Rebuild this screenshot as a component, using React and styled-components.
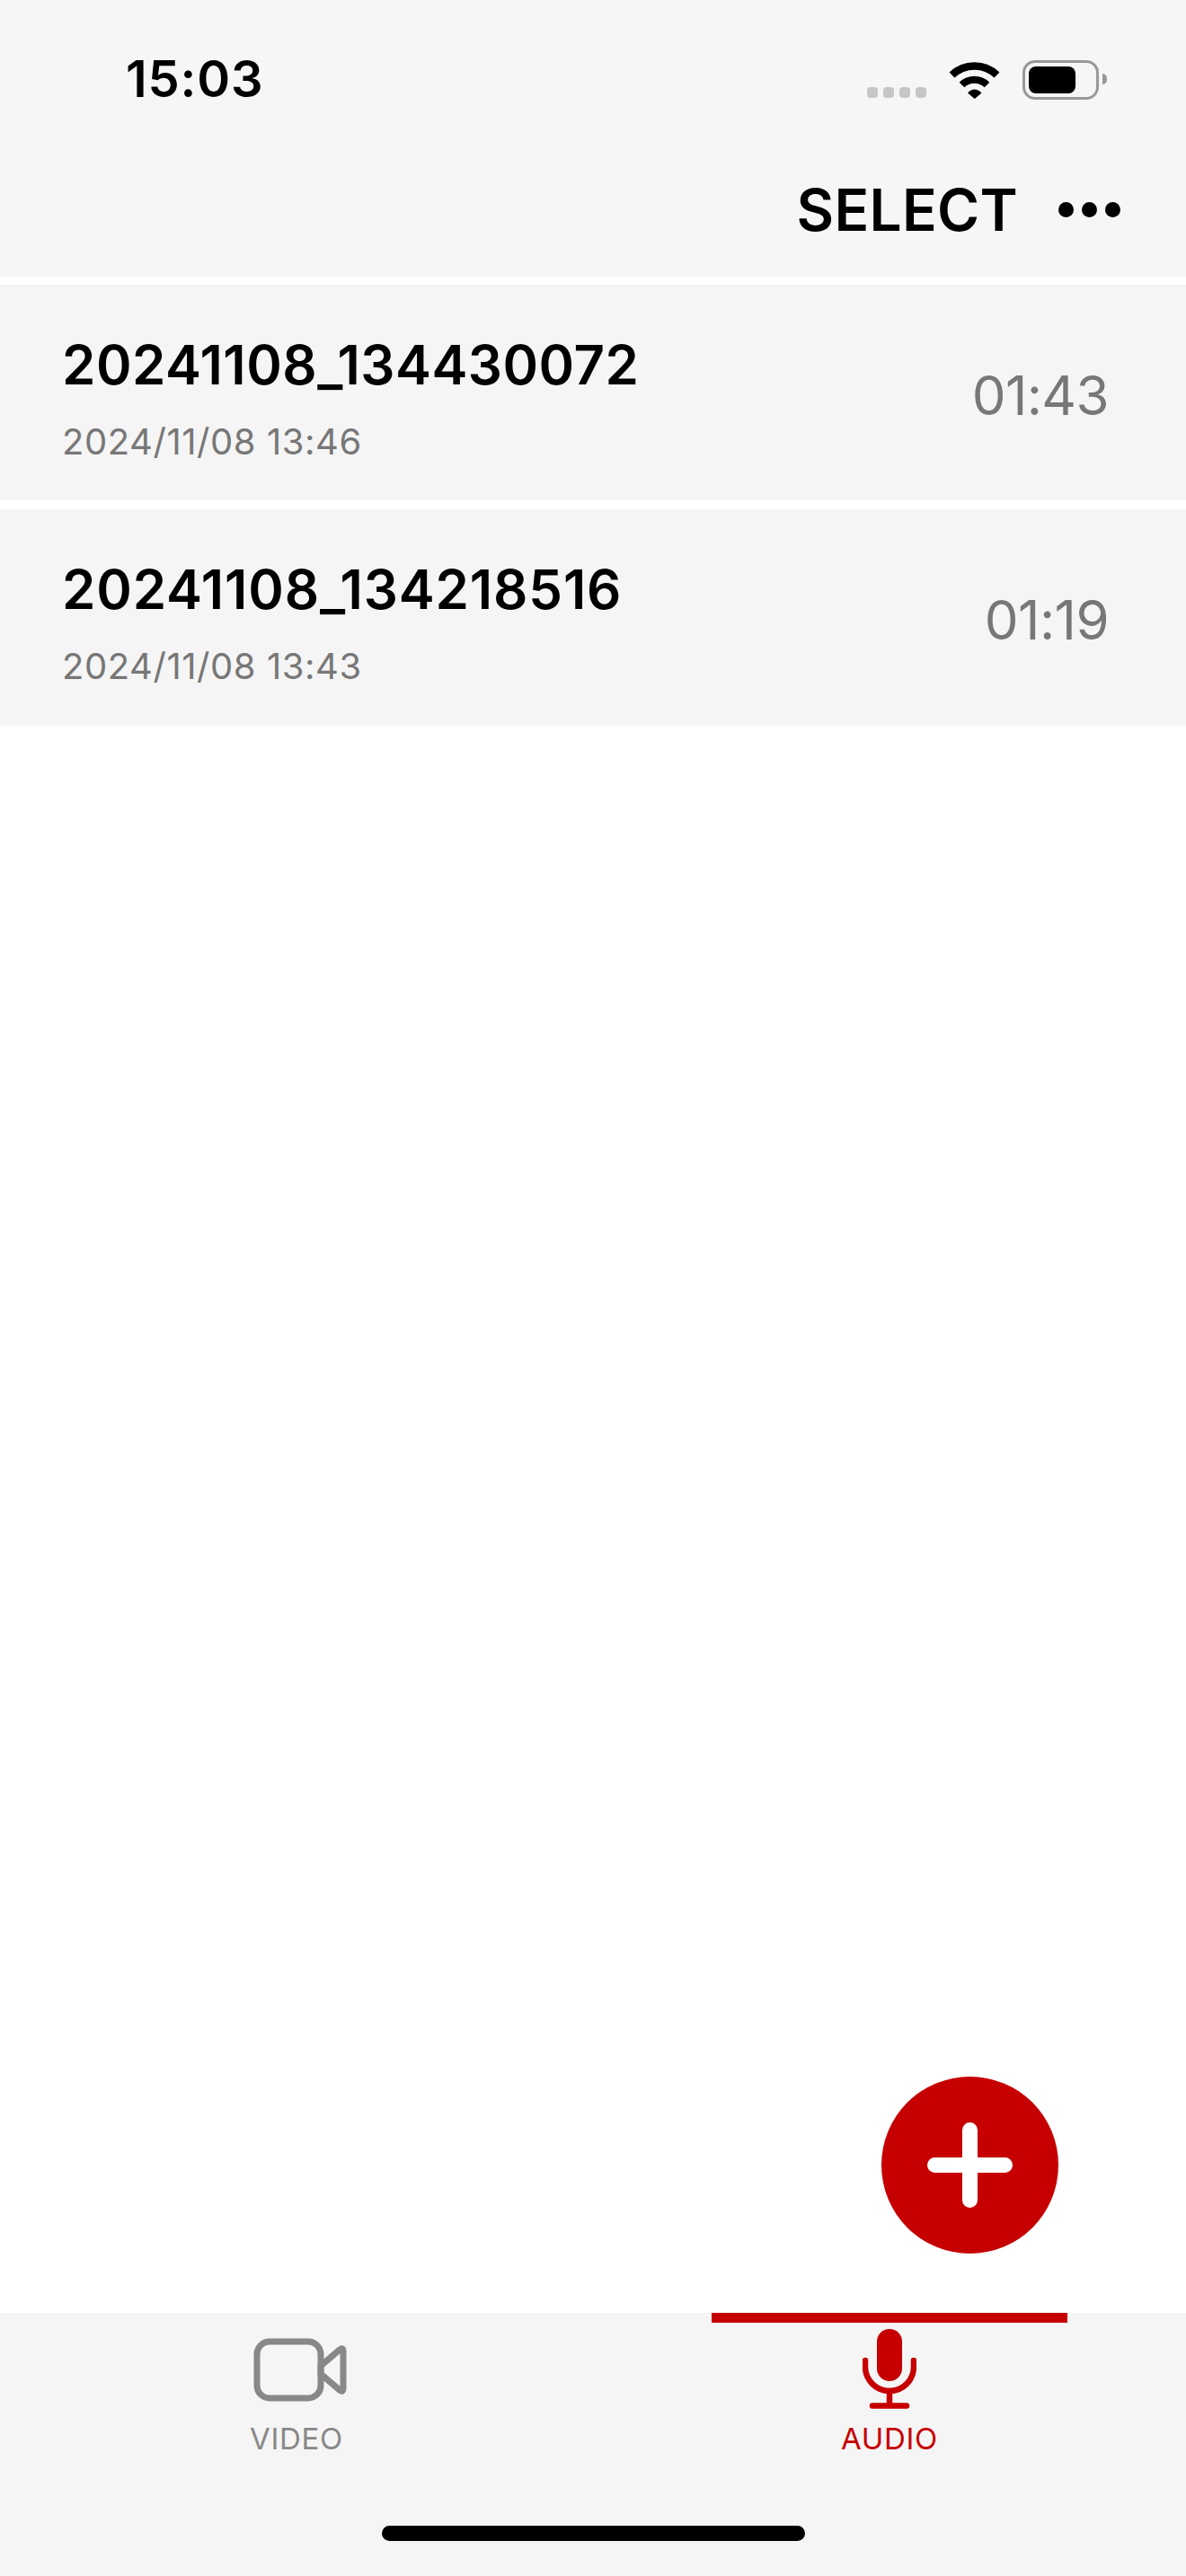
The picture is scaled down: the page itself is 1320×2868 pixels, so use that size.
import React from 'react';
import styled, { createGlobalStyle } from 'styled-components';

const recordings = [
  { name: '20241108_134430072', date: '2024/11/08 13:46', length: '01:43', height: 240, spacing: 0.5 },
  { name: '20241108_134218516', date: '2024/11/08 13:43', length: '01:19', height: 241, spacing: 0.85 },
];

const red = '#c60000';
const grey = '#777777';

const App = () => {
  return (
    <>
      <GlobalStyle />
      <Page>
        <Header>
          <StatusBar>
            <Clock>15:03</Clock>
            <StatusIcons>
              <Cell>
                {[...Array(4)].map((dot, i) => <CellDot key={i} />)}
              </Cell>
              <svg width="57" height="42" viewBox="0 0 57 42">
                <path d="M3.5 15.5 A36 36 0 0 1 53.5 15.5" fill="none" stroke="#000" strokeWidth="8.5" />
                <path d="M14.5 26.5 A20 20 0 0 1 42.5 26.5" fill="none" stroke="#000" strokeWidth="8" />
                <path d="M21 35.5 Q28.5 27.5 36.5 35.5 L28.8 42 Z" fill="#000" />
              </svg>
              <Battery>
                <BatteryLevel />
              </Battery>
            </StatusIcons>
          </StatusBar>
          <NavBar>
            <Select>SELECT</Select>
            <More>
              <MoreDot />
              <MoreDot />
              <MoreDot />
            </More>
          </NavBar>
        </Header>

        <List>
          {recordings.map((item) => (
            <Row key={item.name} $height={item.height}>
              <Info>
                <Name $spacing={item.spacing}>{item.name}</Name>
                <RecordedAt>{item.date}</RecordedAt>
              </Info>
              <Length>{item.length}</Length>
            </Row>
          ))}
        </List>

        <AddButton>
          <svg width="95" height="95" viewBox="0 0 95 95">
            <path d="M47.5 8.5 V86.5 M8.5 47.5 H86.5" stroke="#fff" strokeWidth="17" strokeLinecap="round" />
          </svg>
        </AddButton>

        <TabBar>
          <Tab>
            <VideoIcon>
              <svg width="104" height="71" viewBox="0 0 104 71" fill="none" stroke="#888" strokeWidth="7" strokeLinejoin="round">
                <rect x="4" y="4" width="71" height="63" rx="14" />
                <path d="M75 31 L96 13 Q100 10 100 15 V56 Q100 61 96 58 L75 40 Z" />
              </svg>
            </VideoIcon>
            <TabLabel>VIDEO</TabLabel>
          </Tab>
          <Tab $active>
            <TabIcon>
              <svg width="60" height="90" viewBox="0 0 60 90" fill="none" stroke={red} strokeWidth="6.5" strokeLinecap="round">
                <rect x="16" y="0" width="28" height="58" rx="14" fill={red} stroke="none" />
                <path d="M3 35 V42 A27 27 0 0 0 57 42 V35" />
                <path d="M30 69 V85 M11 85.5 H49" />
              </svg>
            </TabIcon>
            <TabLabel>AUDIO</TabLabel>
          </Tab>
          <HomeIndicator />
        </TabBar>
      </Page>
    </>
  );
};

const GlobalStyle = createGlobalStyle`
  html, body {
    margin: 0;
    padding: 0;
    background: #fff;
  }

  body {
    font-family: Inter, "Liberation Sans", sans-serif;
  }
`;

const Page = styled.div`
  position: relative;
  width: 1320px;
  height: 2868px;
  display: flex;
  flex-direction: column;
  overflow: hidden;
  background: #fff;
`;

const Header = styled.header`
  height: 308px;
  background: #f6f6f6;
`;

const StatusBar = styled.div`
  height: 176px;
  display: flex;
  align-items: center;
  justify-content: space-between;
  padding: 0 97px 0 140px;
  box-sizing: border-box;
`;

const Clock = styled.div`
  font-size: 56px;
  font-weight: 600;
  letter-spacing: 0.8px;
  color: #000;
`;

const StatusIcons = styled.div`
  display: flex;
  align-items: flex-end;
  gap: 25px;
`;

const Cell = styled.div`
  display: flex;
  gap: 6px;
  margin-bottom: 1px;
`;

const CellDot = styled.span`
  width: 12px;
  height: 12px;
  border-radius: 4px;
  background: #c6c6c6;
`;

const Battery = styled.div`
  position: relative;
  width: 85px;
  height: 44px;
  padding: 4px;
  box-sizing: border-box;
  border: 3.5px solid #999;
  border-radius: 14px;
  margin-bottom: -1px;

  &::after {
    content: '';
    position: absolute;
    top: 12px;
    right: -12px;
    width: 5px;
    height: 12px;
    border-radius: 0 6px 6px 0;
    background: #999;
  }
`;

const BatteryLevel = styled.div`
  width: 52px;
  height: 100%;
  border-radius: 8px;
  background: #000;
`;

const NavBar = styled.nav`
  height: 132px;
  display: flex;
  align-items: center;
  justify-content: flex-end;
  gap: 45px;
  padding: 0 73px 17px 0;
  box-sizing: border-box;
`;

const Select = styled.div`
  font-size: 64px;
  font-weight: 600;
  letter-spacing: 0.3px;
  color: #000;
`;

const More = styled.div`
  display: flex;
  gap: 9px;
`;

const MoreDot = styled.span`
  width: 17px;
  height: 17px;
  border-radius: 50%;
  background: #000;
`;

const List = styled.div`
  flex: 1;
  display: flex;
  flex-direction: column;
  gap: 10px;
  padding-top: 9px;
`;

const Row = styled.div`
  height: ${(props) => props.$height}px;
  display: flex;
  align-items: center;
  justify-content: space-between;
  padding: 0 86px 0 69px;
  box-sizing: border-box;
  background: #f5f5f5;
`;

const Info = styled.div`
  margin-top: 11px;
`;

const Name = styled.div`
  font-size: 60px;
  font-weight: 600;
  letter-spacing: ${(props) => props.$spacing}px;
  line-height: 72px;
  color: #000;
`;

const RecordedAt = styled.div`
  margin-top: 26px;
  font-size: 40px;
  letter-spacing: 0.55px;
  line-height: 48px;
  color: ${grey};
`;

const Length = styled.div`
  font-size: 60px;
  letter-spacing: -0.6px;
  line-height: 72px;
  margin-top: 5px;
  color: ${grey};
`;

const AddButton = styled.div`
  position: absolute;
  left: 981px;
  top: 2312px;
  width: 197px;
  height: 197px;
  display: flex;
  align-items: center;
  justify-content: center;
  border-radius: 50%;
  background: ${red};
`;

const TabBar = styled.div`
  position: relative;
  height: 293px;
  display: grid;
  grid-template-columns: 1fr 1fr;
  background: #f5f5f5;
`;

const Tab = styled.div`
  position: relative;
  display: flex;
  flex-direction: column;
  align-items: center;
  color: ${(props) => (props.$active ? red : '#888')};

  &::before {
    content: '';
    display: ${(props) => (props.$active ? 'block' : 'none')};
    position: absolute;
    top: 0;
    left: 132px;
    width: 396px;
    height: 11px;
    background: ${red};
  }
`;

const TabIcon = styled.div`
  height: 90px;
  margin-top: 18px;
  display: flex;
  align-items: center;
  justify-content: center;
`;

const VideoIcon = styled(TabIcon)`
  margin-left: 8px;
`;

const TabLabel = styled.div`
  margin-top: 12px;
  font-size: 33px;
  letter-spacing: 0.7px;
  line-height: 40px;
`;

const HomeIndicator = styled.div`
  position: absolute;
  left: 425px;
  bottom: 39px;
  width: 471px;
  height: 17px;
  border-radius: 9px;
  background: #000;
`;

export default App;
